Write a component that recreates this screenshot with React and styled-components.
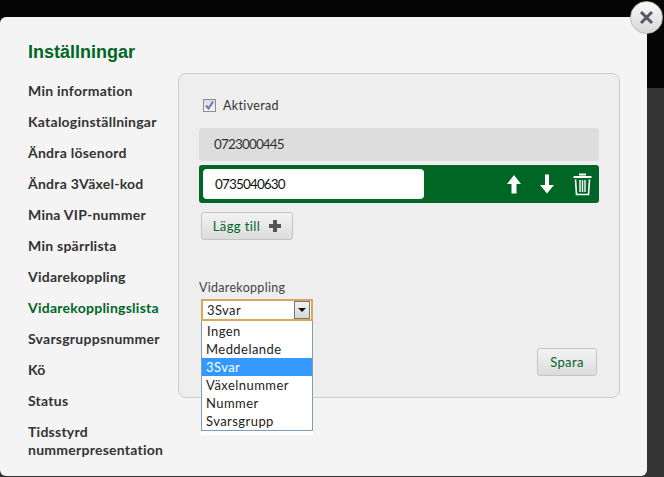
import React from 'react'
import styled, { createGlobalStyle } from 'styled-components'

const Global = createGlobalStyle`
  html, body { margin: 0; padding: 0; }
  body {
    width: 664px;
    height: 477px;
    overflow: hidden;
    background: linear-gradient(#050505 0, #050505 88px, #333 88px);
    font-family: Lato, "Open Sans", sans-serif;
  }
`

const Page = styled.div`
  position: relative;
  width: 664px;
  height: 477px;
  padding-top: 17px;
  box-sizing: border-box;
`

const Modal = styled.div`
  width: 647px;
  height: 459px;
  box-sizing: border-box;
  padding: 25px 27px 0 28px;
  background: #f4f4f4;
  border-radius: 6px;
`

const Title = styled.h1`
  margin: 0;
  height: 31px;
  font: bold 18px/20px "Liberation Sans", Arial, sans-serif;
  color: #006625;
`

const Columns = styled.div`
  display: flex;
`

const Nav = styled.ul`
  list-style: none;
  margin: 0;
  padding: 9px 0 0;
  width: 150px;
`

const NavItem = styled.li`
  margin-bottom: 13px;
  font-size: 14px;
  line-height: 18px;
  letter-spacing: 0.25px;
  font-weight: 700;
  color: ${p => (p.$active ? '#006625' : '#333')};
`

const Panel = styled.div`
  position: relative;
  width: 442px;
  height: 325px;
  box-sizing: border-box;
  padding: 23px 20px 0 20px;
  background: #eee;
  border: 1px solid #ccc;
  border-radius: 8px;
`

const CheckRow = styled.label`
  display: flex;
  align-items: center;
  gap: 7px;
  height: 16px;
  padding-left: 4px;
  font-size: 12.5px;
  letter-spacing: 0.35px;
  color: #333;
`

const CheckBox = styled.span`
  width: 13px;
  height: 13px;
  box-sizing: border-box;
  border: 1px solid #8e8e8e;
  background: linear-gradient(#dcdcdc, #f8f8f8);
  display: flex;
  align-items: center;
  justify-content: center;
`

const NumberRow = styled.div`
  margin-top: 15px;
  height: 33px;
  padding: 0 0 1px 15px;
  box-sizing: border-box;
  display: flex;
  align-items: center;
  background: #ddd;
  border-radius: 3px;
  font-size: 13.5px;
  letter-spacing: -0.85px;
  color: #333;
`

const EditRow = styled.div`
  margin-top: 4px;
  height: 38px;
  padding: 0 7px 0 4px;
  box-sizing: border-box;
  display: flex;
  align-items: center;
  background: #006625;
  border-radius: 3px;
`

const NumberField = styled.div`
  width: 221px;
  height: 30px;
  box-sizing: border-box;
  padding-left: 12px;
  margin-right: auto;
  display: flex;
  align-items: center;
  background: #fff;
  border-radius: 4px;
  font-size: 13.5px;
  letter-spacing: -0.85px;
  color: #111;
`

const IconGroup = styled.div`
  display: flex;
  align-items: center;
  gap: 19px;
`

const Button = styled.button`
  height: 28px;
  box-sizing: border-box;
  display: flex;
  align-items: center;
  justify-content: center;
  gap: 9px;
  padding: 0;
  width: ${p => p.$width}px;
  border: 1px solid #c4c4c4;
  border-radius: 3px;
  background: linear-gradient(#f3f3f3, #dcdcdc);
  font-family: inherit;
  font-size: 13px;
  letter-spacing: 0.4px;
  color: #006625;
`

const AddButton = styled(Button)`
  margin: 9px 0 0 2px;
`

const SaveButton = styled(Button)`
  position: absolute;
  right: 22px;
  bottom: 21px;
`

const FieldLabel = styled.div`
  margin-top: 40px;
  height: 16px;
  font-size: 12.5px;
  line-height: 16px;
  letter-spacing: 0.3px;
  color: #444;
`

const SelectBox = styled.div`
  margin: 3px 0 0 2px;
  width: 112px;
  height: 22px;
  box-sizing: border-box;
  display: flex;
  align-items: center;
  justify-content: space-between;
  padding: 0 1px 0 4px;
  background: #fff;
  border: 2px solid #d8a85a;
  font-size: 13px;
  letter-spacing: 0.4px;
  color: #222;
`

const SelectArrow = styled.span`
  width: 16px;
  height: 18px;
  box-sizing: border-box;
  display: flex;
  align-items: center;
  justify-content: center;
  border: 1px solid #777;
  background: linear-gradient(#f2f2f2, #d6d6d6);
  &::after {
    content: '';
    border: 4px solid transparent;
    border-top: 4px solid #111;
    border-bottom: 0;
  }
`

const Dropdown = styled.ul`
  position: absolute;
  left: 22px;
  top: 247px;
  width: 112px;
  margin: 0;
  padding: 1px 0 5px;
  list-style: none;
  background: #fff;
  font-size: 13px;
  line-height: 18px;
  letter-spacing: 0.45px;
  &::before {
    content: '';
    position: absolute;
    left: 0;
    right: 0;
    top: 0;
    bottom: 4px;
    border: 1px solid #7f9db9;
    border-top: 0;
    pointer-events: none;
  }
`

const Option = styled.li`
  padding-left: ${p => (p.$indent ? 6 : 5)}px;
  background: ${p => (p.$selected ? '#3399ff' : 'transparent')};
  color: ${p => (p.$selected ? '#fff' : '#222')};
`

const CloseButton = styled.div`
  position: absolute;
  left: 630px;
  top: 1px;
  width: 33px;
  height: 33px;
  box-sizing: border-box;
  display: flex;
  align-items: center;
  justify-content: center;
  border: 1px solid #bbb;
  border-radius: 50%;
  background: linear-gradient(#f8f8f8, #d8d8d8);
`

const ArrowUp = () => (
  <svg width="14" height="20" viewBox="0 0 14 20">
    <path d="M7 1 L14 10 H9.5 V19.5 H4.5 V10 H0 Z" fill="#fff" />
  </svg>
)

const ArrowDown = () => (
  <svg width="14" height="20" viewBox="0 0 14 20">
    <path d="M5 0.5 H9 V11 H14 L7 19.5 L0 11 H5 Z" fill="#fff" />
  </svg>
)

const Trash = () => (
  <svg width="19" height="23" viewBox="0 0 19 23" fill="none" stroke="#fff">
    <path d="M6 1.5 H13 M0.5 4 H18.5" strokeWidth="2" />
    <path d="M2.5 6.5 L3.5 21.5 H15.5 L16.5 6.5" strokeWidth="1.6" />
    <path d="M7 7 V19 M9.5 7 V19 M12 7 V19" strokeWidth="1.4" />
  </svg>
)

const menu = [
  'Min information',
  'Kataloginställningar',
  'Ändra lösenord',
  'Ändra 3Växel-kod',
  'Mina VIP-nummer',
  'Min spärrlista',
  'Vidarekoppling',
  'Vidarekopplingslista',
  'Svarsgruppsnummer',
  'Kö',
  'Status',
  'Tidsstyrd nummerpresentation',
]

const options = ['Ingen', 'Meddelande', '3Svar', 'Växelnummer', 'Nummer', 'Svarsgrupp']

export default function App() {
  return (
    <Page>
      <Global />
      <Modal>
        <Title>Inställningar</Title>
        <Columns>
          <Nav>
            {menu.map(item => (
              <NavItem key={item} $active={item === 'Vidarekopplingslista'}>
                {item}
              </NavItem>
            ))}
          </Nav>
          <Panel>
            <CheckRow>
              <CheckBox>
                <svg width="11" height="11" viewBox="0 0 11 11">
                  <path d="M2 5.5 L4.5 8.5 L9 1.5" fill="none" stroke="#6a7fc0" strokeWidth="2.2" />
                </svg>
              </CheckBox>
              Aktiverad
            </CheckRow>
            <NumberRow>0723000445</NumberRow>
            <EditRow>
              <NumberField>0735040630</NumberField>
              <IconGroup>
                <ArrowUp />
                <ArrowDown />
                <Trash />
              </IconGroup>
            </EditRow>
            <AddButton $width={92}>
              Lägg till
              <svg width="12" height="12" viewBox="0 0 12 12">
                <path d="M4 0 H8 V4 H12 V8 H8 V12 H4 V8 H0 V4 H4 Z" fill="#555" />
              </svg>
            </AddButton>
            <FieldLabel>Vidarekoppling</FieldLabel>
            <SelectBox>
              3Svar
              <SelectArrow />
            </SelectBox>
            <Dropdown>
              {options.map(o => (
                <Option key={o} $selected={o === '3Svar'} $indent={o === 'Ingen'}>
                  {o}
                </Option>
              ))}
            </Dropdown>
            <SaveButton $width={60}>Spara</SaveButton>
          </Panel>
        </Columns>
      </Modal>
      <CloseButton>
        <svg width="15" height="15" viewBox="0 0 15 15">
          <path d="M2 2 L13 13 M13 2 L2 13" stroke="#555b66" strokeWidth="3" />
        </svg>
      </CloseButton>
    </Page>
  )
}
